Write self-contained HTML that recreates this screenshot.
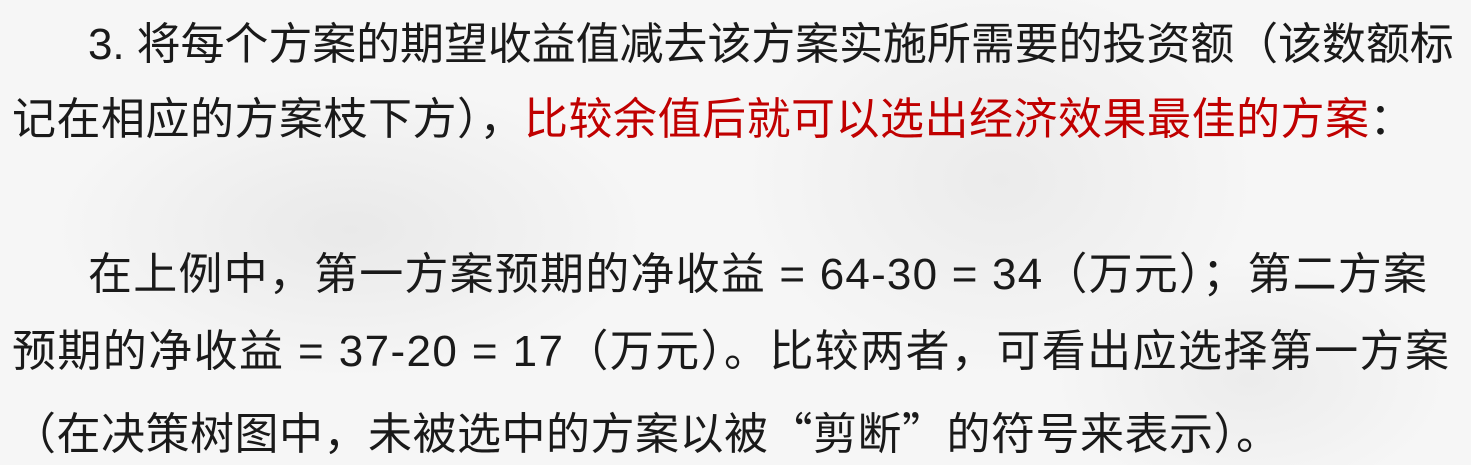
<!DOCTYPE html>
<html><head><meta charset="utf-8"><style>
html,body{margin:0;padding:0}
body{width:1471px;height:465px;overflow:hidden;position:relative;
background:radial-gradient(ellipse 300px 150px at 350px 230px,#e9e9e9,rgba(0,0,0,0)),
radial-gradient(ellipse 260px 200px at 1000px 180px,#ebebeb,rgba(0,0,0,0)),
radial-gradient(ellipse 200px 120px at 1250px 380px,#ececec,rgba(0,0,0,0)),#f6f6f6;
font-family:"Liberation Sans","Noto Sans CJK SC",sans-serif;color:#1a1a1a}
.l{position:absolute;white-space:nowrap;font-size:44px;line-height:50px}
.r{color:#c00000}
.q{font-family:"Noto Sans CJK SC",sans-serif}
</style></head><body>
<div class="l" style="left:88px;top:20px;letter-spacing:-0.1px">3. 将每个方案的期望收益值减去该方案实施所需要的投资额（该数额标</div>
<div class="l" style="left:12px;top:95px;letter-spacing:0.5px">记在相应的方案枝下方），<span class="r">比较余值后就可以选出经济效果最佳的方案</span>：</div>
<div class="l" style="left:88px;top:250px;letter-spacing:1.2px">在上例中，第一方案预期的净收益 = 64-30 = 34（万元）；第二方案</div>
<div class="l" style="left:12px;top:327px;letter-spacing:1.4px">预期的净收益 = 37-20 = 17（万元）。比较两者，可看出应选择第一方案</div>
<div class="l" style="left:12px;top:405px;letter-spacing:0.5px">（在决策树图中，未被选中的方案以被<span class="q">“</span>剪断<span class="q">”</span>的符号来表示）。</div>
</body></html>
